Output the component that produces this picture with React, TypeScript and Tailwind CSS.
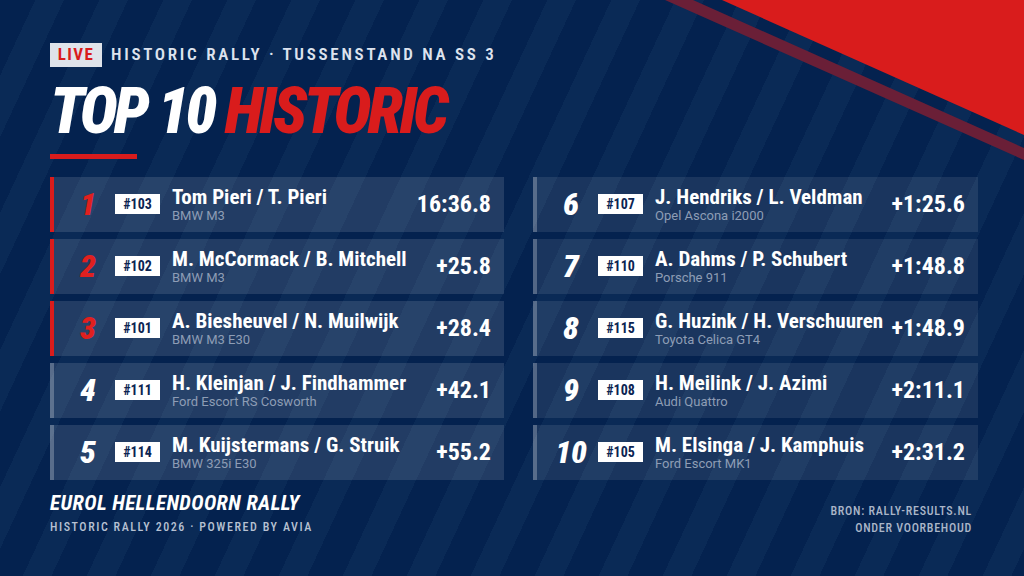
type Row = { pos: number; no: string; name: string; car: string; time: string };

const left: Row[] = [
  { pos: 1, no: "#103", name: "Tom Pieri / T. Pieri", car: "BMW M3", time: "16:36.8" },
  { pos: 2, no: "#102", name: "M. McCormack / B. Mitchell", car: "BMW M3", time: "+25.8" },
  { pos: 3, no: "#101", name: "A. Biesheuvel / N. Muilwijk", car: "BMW M3 E30", time: "+28.4" },
  { pos: 4, no: "#111", name: "H. Kleinjan / J. Findhammer", car: "Ford Escort RS Cosworth", time: "+42.1" },
  { pos: 5, no: "#114", name: "M. Kuijstermans / G. Struik", car: "BMW 325i E30", time: "+55.2" },
];

const right: Row[] = [
  { pos: 6, no: "#107", name: "J. Hendriks / L. Veldman", car: "Opel Ascona i2000", time: "+1:25.6" },
  { pos: 7, no: "#110", name: "A. Dahms / P. Schubert", car: "Porsche 911", time: "+1:48.8" },
  { pos: 8, no: "#115", name: "G. Huzink / H. Verschuuren", car: "Toyota Celica GT4", time: "+1:48.9" },
  { pos: 9, no: "#108", name: "H. Meilink / J. Azimi", car: "Audi Quattro", time: "+2:11.1" },
  { pos: 10, no: "#105", name: "M. Elsinga / J. Kamphuis", car: "Ford Escort MK1", time: "+2:31.2" },
];

function ResultRow({ r, dim }: { r: Row; dim?: boolean }) {
  const podium = r.pos <= 3;
  return (
    <div
      className={
        "flex h-[55px] items-center border-l-4 " +
        (podium ? "border-[#d91c1c] " : "border-white/25 ") +
        (dim ? "bg-white/[0.09]" : "bg-white/[0.12]")
      }
    >
      <div
        className={
          "w-[61px] shrink-0 pl-[7px] text-center text-[32px] font-black italic leading-none " +
          (podium ? "text-[#e0201f]" : "text-white")
        }
      >
        {r.pos}
      </div>
      <div className="flex h-[20px] w-[45px] shrink-0 items-center justify-center bg-white text-[14px] font-bold leading-none text-[#0b2452]">
        {r.no}
      </div>
      <div className="ml-[12px] flex min-w-0 flex-1 flex-col">
        <div className="text-[21px] font-bold leading-[22px] text-white">{r.name}</div>
        <div className="font-['Roboto',sans-serif] text-[13px] leading-[15px] text-[#8e9db5]">{r.car}</div>
      </div>
      <div className="pr-[13px] text-[24px] font-bold leading-none text-white">{r.time}</div>
    </div>
  );
}

export default function App() {
  return (
    <div className="relative h-[576px] w-[1024px] overflow-hidden bg-[#04224f] bg-[repeating-linear-gradient(115deg,#04224f_0px,#04224f_32px,#0a2a56_32px,#0a2a56_58px)] font-['Roboto_Condensed',sans-serif]">
      <svg className="absolute inset-0" width="1024" height="576" viewBox="0 0 1024 576">
        <polygon points="665,0 693,0 1024,148 1024,160" fill="#6a1f37" />
        <polygon points="722,0 1024,0 1024,135" fill="#d91c1c" />
      </svg>

      <div className="relative flex flex-col pl-[50px] pt-[42px]">
        <div className="flex items-center">
          <div className="flex h-[24px] w-[52px] items-center justify-center bg-[#dfe3ea] text-[17px] font-bold tracking-[0.08em] text-[#d91c1c]">
            LIVE
          </div>
          <div className="ml-[9px] text-[17px] font-semibold tracking-[0.16em] text-[#dde3ee]">
            HISTORIC RALLY · TUSSENSTAND NA SS 3
          </div>
        </div>

        <div className="mt-[11px] text-[64px] font-black italic leading-[66px] tracking-[-0.055em]">
          <span className="text-white">TOP 10 </span>
          <span className="text-[#d91c1c]">HISTORIC</span>
        </div>

        <div className="mt-[9px] h-[5px] w-[87px] bg-[#d91c1c]" />

        <div className="mt-[18px] flex gap-[29px]">
          <div className="flex w-[454px] flex-col gap-[7px]">
            {left.map((r) => (
              <ResultRow key={r.pos} r={r} />
            ))}
          </div>
          <div className="flex w-[445px] flex-col gap-[7px]">
            {right.map((r) => (
              <ResultRow key={r.pos} r={r} dim />
            ))}
          </div>
        </div>

        <div className="mt-[13px] flex justify-between pr-[52px]">
          <div className="flex flex-col">
            <div className="text-[21px] font-bold italic leading-[21px] tracking-[0.02em] text-white">
              EUROL HELLENDOORN RALLY
            </div>
            <div className="mt-[7px] text-[12px] font-medium leading-[12px] tracking-[0.13em] text-[#b7c1d2]">
              HISTORIC RALLY 2026 · POWERED BY AVIA
            </div>
          </div>
          <div className="flex flex-col items-end pt-[10px] text-[12px] font-medium leading-[17px] tracking-[0.06em] text-[#aab6c8]">
            <div>BRON: RALLY-RESULTS.NL</div>
            <div>ONDER VOORBEHOUD</div>
          </div>
        </div>
      </div>
    </div>
  );
}
